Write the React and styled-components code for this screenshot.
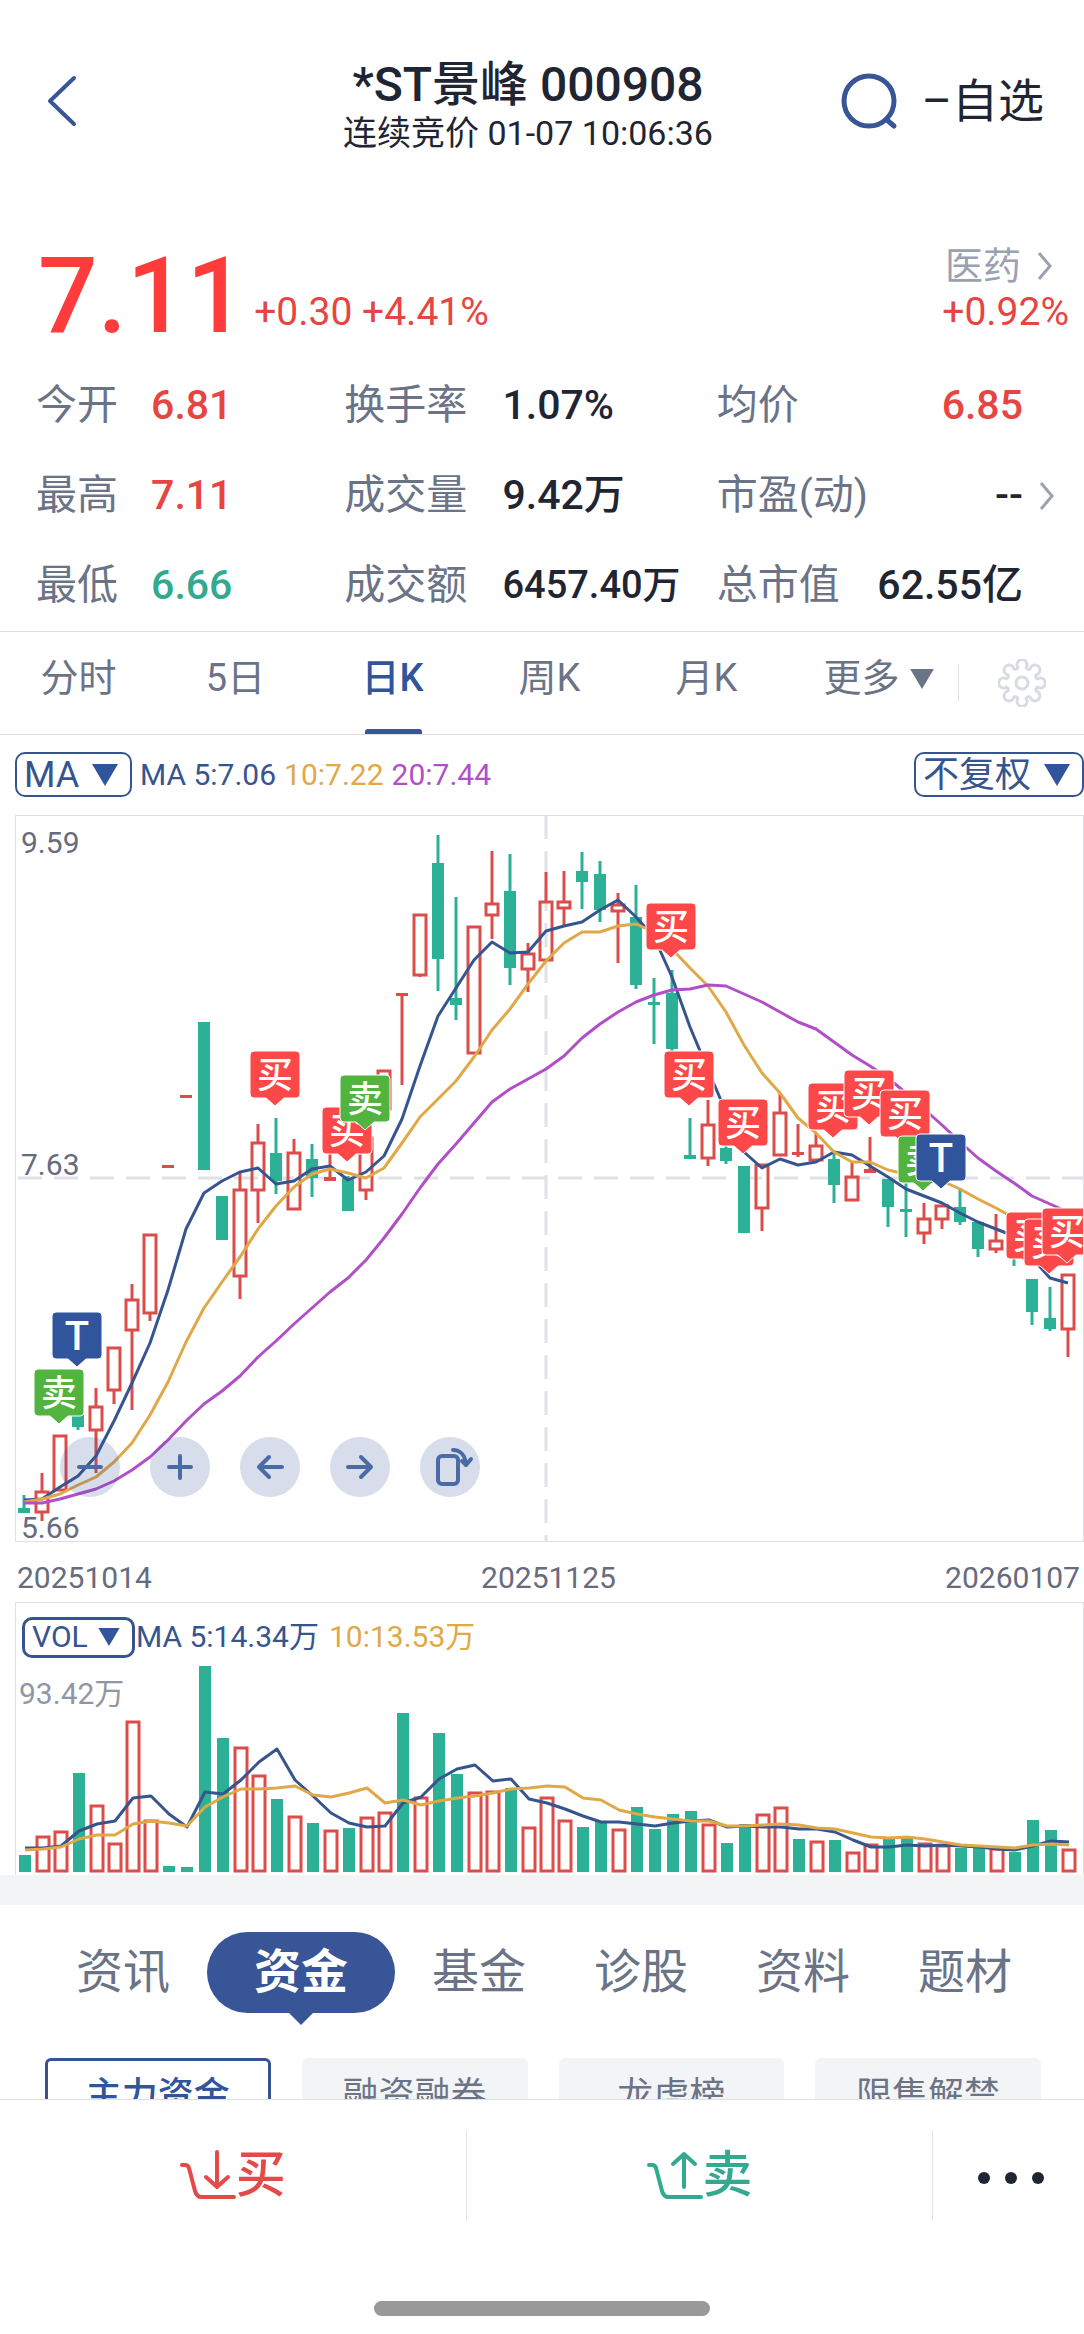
import React from "react";
import styled, { createGlobalStyle } from "styled-components";

const RED = "#dc4c4a";
const GREEN = "#2cb096";
const NAVY = "#36558f";
const GOLD = "#e0a846";
const PURPLE = "#b14fc8";

const STEP = 18;
const FIRST_X = 24;
const xAt = (i) => FIRST_X + i * STEP;

const STATS = [
  [
    { label: "今开", value: "6.81", tone: "up" },
    { label: "换手率", value: "1.07%" },
    { label: "均价", value: "6.85", tone: "up" },
  ],
  [
    { label: "最高", value: "7.11", tone: "up" },
    { label: "成交量", value: "9.42万" },
    { label: "市盈(动)", value: "--", more: true },
  ],
  [
    { label: "最低", value: "6.66", tone: "down" },
    { label: "成交额", value: "6457.40万", small: true },
    { label: "总市值", value: "62.55亿" },
  ],
];

const PERIODS = ["分时", "5日", "日K", "周K", "月K"];
const SECTIONS = ["资讯", "资金", "基金", "诊股", "资料", "题材"];
const FUND_TABS = ["主力资金", "融资融券", "龙虎榜", "限售解禁"];

// kind, high, body top, body bottom, low
const CANDLES = [
  ["g", 1495, 1508, 1513, 1513],
  ["r", 1473, 1491, 1513, 1521],
  ["r", 1435, 1435, 1491, 1491],
  ["g", 1400, 1405, 1427, 1430],
  ["r", 1388, 1406, 1431, 1473],
  ["r", 1347, 1347, 1391, 1404],
  ["r", 1284, 1299, 1331, 1410],
  ["r", 1234, 1234, 1314, 1321],
  ["r", 1166, 1165, 1167, 1166],
  ["r", 1096, 1095, 1097, 1096],
  ["g", 1022, 1022, 1170, 1170],
  ["g", 1196, 1196, 1240, 1240],
  ["r", 1173, 1189, 1277, 1299],
  ["r", 1124, 1142, 1191, 1223],
  ["g", 1118, 1153, 1181, 1194],
  ["r", 1139, 1152, 1210, 1210],
  ["g", 1144, 1159, 1178, 1197],
  ["r", 1140, 1177, 1181, 1181],
  ["g", 1176, 1178, 1211, 1211],
  ["r", 1137, 1137, 1191, 1200],
  ["r", 1070, 1070, 1110, 1110],
  ["r", 994, 993, 995, 1085],
  ["r", 914, 914, 976, 977],
  ["g", 835, 863, 959, 991],
  ["g", 897, 998, 1005, 1020],
  ["r", 926, 926, 1054, 1054],
  ["r", 851, 903, 916, 939],
  ["g", 854, 891, 968, 985],
  ["r", 943, 953, 970, 992],
  ["r", 872, 901, 961, 961],
  ["r", 871, 901, 909, 927],
  ["g", 852, 871, 882, 909],
  ["g", 861, 874, 910, 922],
  ["r", 893, 904, 912, 963],
  ["g", 885, 917, 985, 989],
  ["g", 978, 1002, 1005, 1044],
  ["g", 970, 993, 1049, 1060],
  ["g", 1118, 1155, 1159, 1159],
  ["r", 1100, 1124, 1159, 1166],
  ["g", 1140, 1148, 1161, 1164],
  ["g", 1166, 1166, 1233, 1233],
  ["r", 1164, 1164, 1209, 1231],
  ["r", 1093, 1112, 1156, 1156],
  ["r", 1124, 1152, 1155, 1157],
  ["r", 1133, 1145, 1161, 1163],
  ["g", 1153, 1159, 1185, 1203],
  ["r", 1163, 1176, 1201, 1201],
  ["r", 1137, 1169, 1173, 1173],
  ["g", 1179, 1179, 1207, 1227],
  ["g", 1183, 1209, 1212, 1237],
  ["r", 1203, 1218, 1234, 1244],
  ["r", 1205, 1205, 1220, 1229],
  ["g", 1188, 1207, 1222, 1225],
  ["g", 1222, 1222, 1249, 1257],
  ["r", 1214, 1240, 1250, 1253],
  ["g", 1235, 1238, 1255, 1266],
  ["g", 1279, 1279, 1312, 1325],
  ["g", 1287, 1318, 1329, 1331],
  ["r", 1274, 1274, 1330, 1357],
];

const MA5 = [
  1500, 1499, 1487, 1476, 1456, 1421, 1383, 1343, 1290, 1229, 1193, 1181, 1172, 1168, 1184, 1181,
  1169, 1166, 1180, 1172, 1156, 1119, 1066, 1016, 988, 960, 942, 953, 952, 931, 926, 922, 910, 900,
  917, 937, 977, 1027, 1070, 1112, 1152, 1168, 1159, 1165, 1162, 1152, 1155, 1166, 1177, 1189,
  1196, 1203, 1213, 1222, 1229, 1236, 1258, 1278, 1283,
];
const MA10 = [
  1502, 1499, 1494, 1485, 1477, 1462, 1443, 1415, 1382, 1342, 1308, 1282, 1257, 1229, 1206, 1187,
  1174, 1169, 1173, 1178, 1168, 1143, 1117, 1099, 1081, 1057, 1030, 1009, 984, 961, 943, 932, 932,
  926, 924, 932, 949, 968, 986, 1012, 1045, 1073, 1093, 1118, 1133, 1152, 1162, 1162, 1170, 1174,
  1177, 1181, 1189, 1199, 1208, 1218, 1228, 1235, 1240,
];
const MA20 = [
  1503, 1503, 1499, 1494, 1489, 1481, 1470, 1457, 1440, 1421, 1404, 1391, 1376, 1357, 1341, 1324,
  1308, 1292, 1278, 1260, 1238, 1214, 1188, 1164, 1144, 1123, 1102, 1089, 1079, 1069, 1056, 1038,
  1024, 1012, 1002, 995, 990, 989, 985, 986, 994, 1002, 1012, 1022, 1029, 1042, 1055, 1066, 1078,
  1093, 1109, 1125, 1142, 1158, 1171, 1183, 1196, 1204, 1212,
];

// candle index, top edge, kind
const MARKERS = [
  [2, 1369, "sell"],
  [3, 1312, "both"],
  [14, 1051, "buy"],
  [18, 1107, "buy"],
  [19, 1075, "sell"],
  [36, 903, "buy"],
  [37, 1051, "buy"],
  [40, 1099, "buy"],
  [45, 1083, "buy"],
  [47, 1070, "buy"],
  [49, 1090, "buy"],
  [50, 1136, "sell"],
  [51, 1134, "both"],
  [56, 1212, "buy"],
  [57, 1219, "buy"],
  [58, 1208, "buy"],
];
const MARKER_STYLE = {
  buy: { fill: "#fc4848", text: "买" },
  sell: { fill: "#52b43f", text: "卖" },
  both: { fill: "#30559d", text: "T" },
};

const VOLUMES = [
  "g1855", "r1836", "r1831", "g1773", "r1805", "r1843", "r1721", "r1820", "g1866", "g1867",
  "g1666", "g1738", "r1747", "r1775", "g1799", "r1816", "g1823", "r1830", "g1828", "r1817",
  "r1812", "g1713", "r1797", "g1733", "g1774", "r1792", "r1791", "g1788", "r1827", "r1797",
  "r1820", "g1827", "g1821", "r1829", "g1807", "g1829", "g1814", "g1811", "r1824", "g1843",
  "g1824", "r1814", "r1807", "g1839", "r1841", "g1840", "r1852", "r1844", "g1839", "g1837",
  "r1843", "r1845", "g1848", "g1848", "r1848", "g1852", "g1820", "g1830", "r1849",
];
const VOL_MA5 = [
  1848, 1848, 1846, 1831, 1824, 1821, 1798, 1796, 1814, 1827, 1792, 1794, 1780, 1762, 1749, 1780,
  1796, 1813, 1823, 1827, 1826, 1803, 1797, 1779, 1769, 1765, 1781, 1779, 1799, 1803, 1809, 1816,
  1822, 1822, 1824, 1826, 1823, 1821, 1820, 1827, 1826, 1827, 1827, 1829, 1829, 1832, 1840, 1847,
  1847, 1845, 1846, 1845, 1846, 1847, 1849, 1850, 1846, 1841, 1842,
];
const VOL_MA10 = [
  1850, 1849, 1847, 1839, 1835, 1835, 1824, 1821, 1823, 1826, 1807, 1797, 1789, 1789, 1788, 1786,
  1795, 1797, 1793, 1788, 1803, 1800, 1805, 1801, 1798, 1796, 1793, 1789, 1788, 1786, 1787, 1798,
  1800, 1810, 1814, 1817, 1819, 1821, 1821, 1826, 1826, 1825, 1824, 1825, 1828, 1829, 1833, 1837,
  1838, 1837, 1839, 1842, 1845, 1846, 1847, 1848, 1845, 1844, 1845,
];

const linePoints = (values) => values.map((y, i) => `${xAt(i)},${y}`).join(" ");

const Candle = ({ x, kind, high, top, bottom, low }) => {
  const color = kind === "r" ? RED : GREEN;
  const solid = kind === "g" || bottom - top < 5;
  return (
    <g stroke={color} strokeWidth="3">
      {high < top && <line x1={x} x2={x} y1={high} y2={top} />}
      {low > bottom && <line x1={x} x2={x} y1={bottom} y2={low} />}
      {solid ? (
        <rect x={x - 6} y={top} width="12" height={Math.max(bottom - top, 3)} fill={color} stroke="none" />
      ) : (
        <rect x={x - 6} y={top + 1} width="12" height={bottom - top - 2} fill="none" />
      )}
    </g>
  );
};

const Marker = ({ x, y, kind }) => {
  const { fill, text } = MARKER_STYLE[kind];
  return (
    <g>
      <path
        d={`M${x - 21} ${y}H${x + 21}a4 4 0 0 1 4 4V${y + 43}a4 4 0 0 1 -4 4H${x + 9}L${x} ${y + 55}L${x - 9} ${y + 47}H${x - 21}a4 4 0 0 1 -4 -4V${y + 4}a4 4 0 0 1 4 -4Z`}
        fill={fill}
        stroke="#fff"
        strokeWidth="1"
      />
      <text
        x={x}
        y={kind === "both" ? y + 38 : y + 37}
        textAnchor="middle"
        fontSize={kind === "both" ? 40 : 36}
        fontWeight="500"
        fill="#fff"
      >
        {text}
      </text>
    </g>
  );
};

const PriceChart = () => (
  <Drawing viewBox="16 816 1067 725" role="img" aria-label="日K线图">
    <g stroke="#e0e1e6" strokeWidth="3" strokeDasharray="24 12">
      <line x1="546" x2="546" y1="815" y2="1541" />
      <line x1="18" x2="1083" y1="1178" y2="1178" />
    </g>
    {CANDLES.map(([kind, high, top, bottom, low], i) => (
      <Candle key={i} x={xAt(i)} kind={kind} high={high} top={top} bottom={bottom} low={low} />
    ))}
    <g fill="none" strokeWidth="3" strokeLinejoin="round">
      <polyline points={linePoints(MA5)} stroke={NAVY} />
      <polyline points={linePoints(MA10)} stroke={GOLD} />
      <polyline points={linePoints(MA20)} stroke={PURPLE} />
    </g>
    <g fontSize="30" fill="#666b7e">
      <text x="21" y="853">9.59</text>
      <text x="21" y="1175">7.63</text>
      <text x="21" y="1538">5.66</text>
    </g>
    {MARKERS.map(([i, y, kind]) => (
      <Marker key={i} x={xAt(i) - 1} y={y} kind={kind} />
    ))}
  </Drawing>
);

const VolumeChart = () => (
  <Drawing viewBox="15 1660 1067 215" role="img" aria-label="成交量">
    <text x="18" y="1704" fontSize="30" fill="#9295a5">
      93.42万
    </text>
    {VOLUMES.map((bar, i) => {
      const top = Number(bar.slice(1));
      const x = xAt(i);
      return bar[0] === "g" ? (
        <rect key={i} x={x - 6} y={top} width="12" height={1872 - top} fill={GREEN} />
      ) : (
        <rect key={i} x={x - 6} y={top + 1} width="12" height={1870 - top} fill="none" stroke={RED} strokeWidth="3" />
      );
    })}
    <g fill="none" strokeWidth="3" strokeLinejoin="round">
      <polyline points={linePoints(VOL_MA5)} stroke={NAVY} />
      <polyline points={linePoints(VOL_MA10)} stroke={GOLD} />
    </g>
  </Drawing>
);

const Chevron = () => (
  <svg width="16" height="30" viewBox="0 0 16 30" fill="none" stroke="#9aa1b0" strokeWidth="3">
    <path d="M2 2L13 15L2 28" />
  </svg>
);

const Triangle = ({ width = 26, height = 22 }) => (
  <svg width={width} height={height} viewBox="0 0 26 22" fill="currentColor" aria-hidden="true">
    <path d="M0 0H26L13 22Z" />
  </svg>
);

// eight round teeth joined by small inward curves
const gearPath = () => {
  const point = (deg) => {
    const a = (deg * Math.PI) / 180;
    return `${(24 + 16 * Math.cos(a)).toFixed(1)} ${(24 + 16 * Math.sin(a)).toFixed(1)}`;
  };
  let d = `M${point(-15)}`;
  for (let k = 0; k < 8; k += 1) {
    d += `A5 5 0 1 1 ${point(45 * k + 15)}A3 3 0 0 0 ${point(45 * k + 30)}`;
  }
  return `${d}Z`;
};

const GearIcon = () => (
  <svg width="48" height="48" viewBox="0 0 48 48" fill="none" stroke="#d9dbe3" strokeWidth="3" strokeLinejoin="round">
    <path d={gearPath()} />
    <circle cx="24" cy="24" r="6" />
  </svg>
);

const CartIcon = ({ up }) => (
  <svg width="56" height="50" viewBox="0 0 56 50" fill="none" stroke="currentColor" strokeWidth="4" strokeLinecap="round" strokeLinejoin="round">
    <path d="M2 15H5Q8 15 9 18L15 41Q17 47 21 47H54" />
    {up ? <path d="M37 37V4M26 14L37 4L48 14" /> : <path d="M37 2V37M26 27L37 37L48 27" />}
  </svg>
);

const TOOLS = [
  { name: "缩小", icon: <path d="M19 30H41" /> },
  { name: "放大", icon: <path d="M19 30H41M30 19V41" /> },
  { name: "左移", icon: <path d="M42 30H19M29 20L19 30L29 40" /> },
  { name: "右移", icon: <path d="M18 30H41M31 20L41 30L31 40" /> },
  {
    name: "横屏",
    icon: (
      <>
        <rect x="18" y="19" width="20" height="28" rx="4" />
        <path d="M33 13C40 13 45 18 46 27M42 24L46 28L51 22" />
      </>
    ),
  },
];

const App = () => {
  return (
    <>
      <GlobalStyle />
      <Page>
        <Content>
          <Header>
            <BackButton type="button" aria-label="返回">
              <svg width="32" height="52" viewBox="0 0 32 52" fill="none" stroke="#385597" strokeWidth="4" strokeLinecap="round" strokeLinejoin="round">
                <path d="M27 3L3 26L27 49" />
              </svg>
            </BackButton>
            <Heading>
              <Title>*ST景峰 000908</Title>
              <Subtitle>连续竞价 01-07 10:06:36</Subtitle>
            </Heading>
            <HeaderActions>
              <IconButton type="button" aria-label="搜索">
                <svg width="60" height="58" viewBox="0 0 60 58" fill="none" stroke="#385597" strokeWidth="5" strokeLinecap="round">
                  <circle cx="29" cy="29" r="25" />
                  <path d="M47 48L54 54" />
                </svg>
              </IconButton>
              <WatchButton type="button">–自选</WatchButton>
            </HeaderActions>
          </Header>

          <Quote>
            <Price>7.11</Price>
            <Change>+0.30 +4.41%</Change>
            <Sector href="#sector">
              <SectorName>
                医药 <Chevron />
              </SectorName>
              <SectorChange>+0.92%</SectorChange>
            </Sector>
          </Quote>

          <Stats>
            {STATS.map((row) => (
              <StatRow key={row[0].label}>
                {row.map((item) => (
                  <React.Fragment key={item.label}>
                    <StatLabel>{item.label}</StatLabel>
                    <StatValue $tone={item.tone} $small={item.small}>
                      {item.value}
                    </StatValue>
                  </React.Fragment>
                ))}
                <StatMore>{row[2].more && <Chevron />}</StatMore>
              </StatRow>
            ))}
          </Stats>

          <Periods>
            {PERIODS.map((name) => (
              <PeriodTab type="button" key={name} $active={name === "日K"}>
                {name}
              </PeriodTab>
            ))}
            <MoreTab type="button">
              更多 <Triangle width={24} height={20} />
            </MoreTab>
            <SettingsButton type="button" aria-label="设置">
              <GearIcon />
            </SettingsButton>
          </Periods>

          <IndicatorBar>
            <Picker>
              <Select aria-label="主图指标" defaultValue="MA">
                <option>MA</option>
              </Select>
              <Triangle />
            </Picker>
            <Legend $color={NAVY}>MA 5:7.06</Legend>
            <Legend $color={GOLD}>10:7.22</Legend>
            <Legend $color={PURPLE}>20:7.44</Legend>
            <Spacer />
            <Picker>
              <Select aria-label="复权方式" defaultValue="不复权">
                <option>不复权</option>
              </Select>
              <Triangle />
            </Picker>
          </IndicatorBar>

          <PricePanel>
            <PriceChart />
            <Tools>
              {TOOLS.map((tool) => (
                <ToolButton type="button" key={tool.name} aria-label={tool.name}>
                  <svg width="60" height="60" viewBox="0 0 60 60" fill="none" stroke="#4a6ba5" strokeWidth="4" strokeLinecap="round" strokeLinejoin="round">
                    {tool.icon}
                  </svg>
                </ToolButton>
              ))}
            </Tools>
          </PricePanel>
          <Dates>
            <span>20251014</span>
            <span>20251125</span>
            <span>20260107</span>
          </Dates>

          <VolumePanel>
            <VolumeBar>
              <Picker $compact>
                <Select aria-label="副图指标" defaultValue="VOL" $compact>
                  <option>VOL</option>
                </Select>
                <Triangle width={22} height={18} />
              </Picker>
              <Legend $color={NAVY}>MA 5:14.34万</Legend>
              <Legend $color={GOLD}>10:13.53万</Legend>
            </VolumeBar>
            <VolumeChart />
          </VolumePanel>
          <Band />

          <Sections>
            {SECTIONS.map((name) => (
              <SectionTab type="button" key={name} $active={name === "资金"}>
                {name}
              </SectionTab>
            ))}
          </Sections>
          <FundTabs>
            {FUND_TABS.map((name, i) => (
              <FundTab type="button" key={name} $active={i === 0}>
                {name}
              </FundTab>
            ))}
          </FundTabs>
        </Content>

        <Footer>
          <TradeBar>
            <TradeButton type="button" $color="#e24b48">
              <CartIcon />买
            </TradeButton>
            <TradeButton type="button" $color="#33a98f">
              <CartIcon up />卖
            </TradeButton>
            <DotsButton type="button" aria-label="更多操作">
              <svg width="66" height="14" viewBox="0 0 66 14" fill="#1f2533">
                <circle cx="6" cy="7" r="6" />
                <circle cx="33" cy="7" r="6" />
                <circle cx="60" cy="7" r="6" />
              </svg>
            </DotsButton>
          </TradeBar>
          <HomeIndicator />
        </Footer>
      </Page>
    </>
  );
};
export default App;

const GlobalStyle = createGlobalStyle`
  * {
    box-sizing: border-box;
  }
  body {
    margin: 0;
    background: #fff;
    color: #1f2533;
    font-family: Roboto, "Noto Sans CJK SC", sans-serif;
    line-height: 1.2;
  }
  button, select {
    margin: 0;
    padding: 0;
    border: 0;
    background: none;
    color: inherit;
    font: inherit;
    cursor: pointer;
  }
  svg {
    display: block;
    flex-shrink: 0;
  }
`;

const Page = styled.div`
  display: flex;
  flex-direction: column;
  height: 100vh;
`;
const Content = styled.main`
  flex: 1;
  min-height: 0;
  overflow-y: auto;
  scrollbar-width: none;
`;

const Header = styled.header`
  display: grid;
  grid-template-columns: 1fr auto 1fr;
  align-items: center;
  padding: 49px 40px 90px 12px;
`;
const BackButton = styled.button`
  justify-self: start;
  padding-left: 35px;
`;
const Heading = styled.div`
  padding-top: 8px;
  text-align: center;
`;
const Title = styled.h1`
  margin: 0;
  font-size: 48px;
  font-weight: 500;
  line-height: 56px;
`;
const Subtitle = styled.div`
  font-size: 34px;
  line-height: 40px;
`;
const HeaderActions = styled.div`
  display: flex;
  align-items: center;
  justify-content: flex-end;
  gap: 22px;
`;
const IconButton = styled.button``;
const WatchButton = styled.button`
  font-size: 46px;
  line-height: 56px;
  white-space: nowrap;
`;

const Quote = styled.section`
  display: flex;
  align-items: flex-end;
  padding: 0 15px 0 38px;
  color: #e64542;
`;
const Price = styled.div`
  color: #ff3b3b;
  font-size: 105px;
  font-weight: 500;
  line-height: 76px;
`;
const Change = styled.div`
  margin-left: 8px;
  font-size: 39px;
  line-height: 46px;
`;
const Sector = styled.a`
  margin-left: auto;
  color: inherit;
  font-size: 39px;
  line-height: 46px;
  text-decoration: none;
`;
const SectorName = styled.div`
  display: flex;
  align-items: center;
  justify-content: flex-end;
  gap: 16px;
  padding-right: 16px;
  color: #9aa1b0;
  font-size: 38px;
`;
const SectorChange = styled.div``;

const Stats = styled.section`
  padding: 26px 29px 0 36px;
  border-bottom: 1px solid #dfe0e4;
`;
const StatRow = styled.dl`
  display: grid;
  grid-template-columns: 115fr 193fr 158fr 214fr 156fr 150fr 32fr;
  align-items: center;
  height: 90px;
  margin: 0;
`;
const StatLabel = styled.dt`
  color: #6b7387;
  font-size: 41px;
  white-space: nowrap;
`;
const StatValue = styled.dd`
  margin: 0;
  color: ${({ $tone }) => ($tone === "up" ? "#e64542" : $tone === "down" ? "#33a98f" : "#1f2533")};
  font-size: ${({ $small }) => ($small ? "38px" : "41px")};
  font-weight: 500;
  white-space: nowrap;

  &:nth-of-type(3) {
    justify-self: end;
  }
`;
const StatMore = styled.dd`
  margin: 0;
  justify-self: end;
`;

const Periods = styled.nav`
  display: flex;
  height: 103px;
  border-bottom: 1px solid #dfe0e4;
  color: #6b7387;
  font-size: 38px;
`;
const PeriodTab = styled.button`
  position: relative;
  flex: 157;
  padding-bottom: 8px;
  color: ${({ $active }) => ($active ? "#30559d" : "inherit")};
  font-weight: ${({ $active }) => ($active ? 500 : 400)};

  &::after {
    content: ${({ $active }) => ($active ? '""' : "none")};
    position: absolute;
    left: 50%;
    bottom: 0;
    width: 57px;
    height: 5px;
    margin-left: -28px;
    border-radius: 3px 3px 0 0;
    background: #385597;
  }
`;
const MoreTab = styled.button`
  display: flex;
  flex: 159;
  align-items: center;
  justify-content: center;
  gap: 10px;
  padding-bottom: 8px;
  padding-left: 14px;
`;
const SettingsButton = styled.button`
  display: flex;
  flex: 126;
  align-items: center;
  justify-content: center;

  &::before {
    content: "";
    width: 1px;
    height: 36px;
    margin-right: auto;
    background: #dfe0e4;
  }

  svg {
    margin-right: auto;
  }
`;

const IndicatorBar = styled.div`
  display: flex;
  align-items: center;
  gap: 8px;
  padding: 17px 0 18px 15px;
`;
const Picker = styled.span`
  position: relative;
  display: inline-flex;
  align-items: center;
  height: ${({ $compact }) => ($compact ? "41px" : "45px")};
  border: ${({ $compact }) => ($compact ? "3px" : "2px")} solid #36558f;
  border-radius: 10px;
  color: #30559d;

  svg {
    position: absolute;
    right: 12px;
    pointer-events: none;
  }
`;
const Select = styled.select`
  height: 100%;
  padding: ${({ $compact }) => ($compact ? "0 44px 0 7px" : "0 50px 0 7px")};
  appearance: none;
  outline: none;
  color: #36558f;
  font-size: ${({ $compact }) => ($compact ? "30px" : "36px")};
  line-height: 1;
`;
const Legend = styled.span`
  color: ${({ $color }) => $color};
  font-size: 30px;
  line-height: 40px;
  white-space: nowrap;
`;
const Spacer = styled.span`
  flex: 1;
`;

const PricePanel = styled.section`
  position: relative;
  margin-left: 15px;
  border: 1px solid #dfe0e4;
  overflow: hidden;
`;
const Drawing = styled.svg`
  width: 100%;
  height: auto;
`;
const Tools = styled.div`
  position: absolute;
  left: 44px;
  bottom: 44px;
  display: flex;
  gap: 30px;
`;
const ToolButton = styled.button`
  width: 60px;
  height: 60px;
  border-radius: 50%;
  background: rgba(56, 85, 151, 0.2);
`;
const Dates = styled.div`
  display: flex;
  justify-content: space-between;
  padding: 12px 4px 0 17px;
  color: #666b7e;
  font-size: 30px;
  line-height: 48px;
`;

const VolumePanel = styled.section`
  margin-left: 15px;
  border: 1px solid #dfe0e4;
  border-bottom: 0;
`;
const VolumeBar = styled.div`
  display: flex;
  align-items: center;
  gap: 10px;
  height: 57px;
  padding: 11px 0 0 6px;

  ${Picker} {
    margin-right: -9px;
  }
`;
const Band = styled.div`
  height: 30px;
  background: #f3f4f6;
`;

const Sections = styled.nav`
  display: flex;
  justify-content: center;
  padding: 27px 0 0 4px;
  color: #6b7387;
`;
const SectionTab = styled.button`
  position: relative;
  height: 81px;
  margin: ${({ $active }) => ($active ? "0 3px" : "0")};
  padding: ${({ $active }) => ($active ? "0 47px 2px" : "0 34px 2px")};
  border-radius: 41px;
  background: ${({ $active }) => ($active ? "#385597" : "none")};
  color: ${({ $active }) => ($active ? "#fff" : "inherit")};
  font-size: 47px;
  font-weight: ${({ $active }) => ($active ? 700 : 400)};
  line-height: 76px;

  &::after {
    content: ${({ $active }) => ($active ? '""' : "none")};
    position: absolute;
    left: 50%;
    top: 100%;
    margin-left: -12px;
    border: 12px solid transparent;
    border-top-color: #385597;
    border-bottom: 0;
  }
`;
const FundTabs = styled.div`
  display: grid;
  grid-template-columns: repeat(4, 1fr);
  gap: 31px;
  padding: 45px 43px 0 45px;
`;
const FundTab = styled.button`
  height: 78px;
  border: ${({ $active }) => ($active ? "3px solid #36558f" : "3px solid #f3f4f6")};
  border-radius: 6px;
  background: ${({ $active }) => ($active ? "#fff" : "#f3f4f6")};
  color: ${({ $active }) => ($active ? "#30559d" : "#6b7387")};
  font-size: 36px;
  font-weight: ${({ $active }) => ($active ? 500 : 400)};
`;

const Footer = styled.footer`
  padding: 30px 0 18px;
  border-top: 1px solid #dfe0e4;
  background: #fff;
`;
const TradeBar = styled.div`
  display: flex;
  height: 90px;
`;
const TradeButton = styled.button`
  display: flex;
  flex: 467;
  align-items: center;
  justify-content: center;
  border-right: 1px solid #e3e4e8;
  color: ${({ $color }) => $color};
  font-size: 50px;
  font-weight: 500;
  line-height: 60px;
`;
const DotsButton = styled.button`
  display: flex;
  flex: 147;
  align-items: center;
  justify-content: center;
  padding: 5px 0 0 4px;
`;
const HomeIndicator = styled.div`
  width: 31%;
  height: 15px;
  margin: 81px auto 0;
  border-radius: 8px;
  background: #999;
`;
